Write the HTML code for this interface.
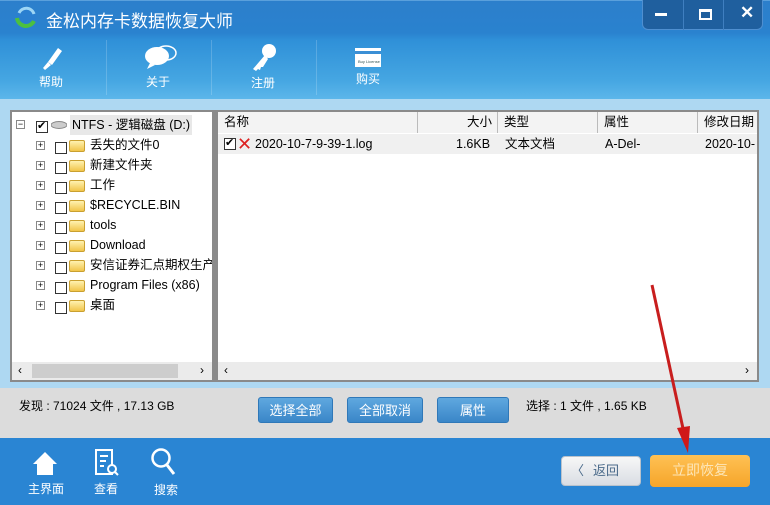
<!DOCTYPE html><html><head><meta charset="utf-8"><style>
*{margin:0;padding:0;box-sizing:border-box}
body{width:770px;height:505px;overflow:hidden;position:relative;font-family:"Liberation Sans","Microsoft YaHei","Noto Sans CJK SC",sans-serif;font-size:12px;background:#aed8f2}
.abs{position:absolute}
#top{left:0;top:0;width:770px;height:99px;background:linear-gradient(#2c7fcb 0,#2a82cf 33px,#2f90d8 40px,#45a6e2 80px,#5cb6ea 99px)}
.title{left:46px;top:7px;color:#fff;font-size:17px;font-family:"Liberation Sans","Noto Sans CJK SC",sans-serif}
.tb{color:#fff;font-size:12px;text-align:center;width:60px}
.sep{top:40px;width:1px;height:55px;background:rgba(255,255,255,.18)}
#win{left:642px;top:0;width:121px;height:30px;background:#1f5f9e;border-radius:0 0 6px 6px;border:1px solid #4f8fd0;border-top:none}
.panel{background:#fff;border:2px solid #8a8a8a;overflow:hidden}
.row{position:absolute;left:0;height:20px;line-height:20px;font-size:12.5px;color:#000;white-space:nowrap}
.cb{position:absolute;width:12px;height:12px;border:1px solid #333;background:#fff}
.pl{position:absolute;width:9px;height:9px;border:1px solid #888;background:#fff;font-size:9px;line-height:7px;text-align:center;color:#000}
.fd{position:absolute;width:16px;height:12px;background:linear-gradient(#fff2b0,#f1c54a);border:1px solid #c9a030;border-radius:2px}
.hd{position:absolute;top:0;height:21px;line-height:21px;border-right:1px solid #bbb;background:#f3f3f3;font-size:12.5px}
.btn{position:absolute;top:397px;height:26px;line-height:26px;color:#fff;text-align:center;font-size:13px;background:linear-gradient(#5fa8df,#3a86c8);border:1px solid #2f78b8;border-radius:3px}
.bi{color:#fff;font-size:12px;text-align:center}
</style></head><body>
<div id="top" class="abs"></div>
<div class="abs" style="left:0;top:0;width:770px;height:1px;background:#5aa0dc"></div>
<svg class="abs" style="left:14px;top:5px" width="24" height="24"><circle cx="12" cy="12" r="10" fill="#2a7fd0"/><path d="M3 13a9 9 0 0 0 17 3" stroke="#4cc040" stroke-width="4" fill="none"/><path d="M5 8a8 8 0 0 1 15 1" stroke="#9dd6f5" stroke-width="3" fill="none"/></svg>
<div class="abs title">金松内存卡数据恢复大师</div>
<div id="win" class="abs"><div class="abs" style="left:12px;top:13px;width:12px;height:3px;background:#fff"></div><div class="abs" style="left:56px;top:9px;width:13px;height:11px;border:2px solid #fff;border-top-width:3px"></div><div class="abs" style="left:97px;top:3px;color:#fff;font-size:17px;font-weight:bold">✕</div><div class="abs" style="left:40px;top:0;width:1px;height:30px;background:#3f7fc0"></div><div class="abs" style="left:80px;top:0;width:1px;height:30px;background:#3f7fc0"></div></div>
<div class="abs sep" style="left:106px"></div><div class="abs sep" style="left:211px"></div><div class="abs sep" style="left:316px"></div>
<svg class="abs" style="left:38px;top:44px" width="26" height="28"><path d="M10 18l10-14 4 3-10 14z" fill="#fff"/><path d="M10 18l-5 6 2 2 6-5z" fill="#fff"/></svg>
<svg class="abs" style="left:144px;top:44px" width="34" height="28"><ellipse cx="13" cy="12" rx="12" ry="9" fill="#fff"/><path d="M6 19l-3 6 8-4z" fill="#fff"/><ellipse cx="22" cy="9" rx="10" ry="7" fill="none" stroke="#fff" stroke-width="1.5"/></svg>
<svg class="abs" style="left:250px;top:42px" width="28" height="30"><circle cx="19" cy="9" r="7" fill="#fff"/><path d="M15 13l-12 14 3 2 2-2 2 1 1-3 2 0 5-8z" fill="#fff"/></svg>
<svg class="abs" style="left:355px;top:48px" width="28" height="20"><rect x="0" y="0" width="26" height="19" fill="#fff"/><rect x="0" y="3" width="26" height="3" fill="#3b8fd5"/><text x="3" y="15" font-size="4" fill="#355">Buy License</text></svg>
<div class="abs tb" style="left:21px;top:73px">帮助</div>
<div class="abs tb" style="left:128px;top:73px">关于</div>
<div class="abs tb" style="left:233px;top:74px">注册</div>
<div class="abs tb" style="left:338px;top:70px">购买</div>

<div class="abs panel" style="left:10px;top:110px;width:204px;height:272px">
<div class="row" style="top:3px;left:4px"><span class="pl" style="left:0;top:5px">−</span><span class="cb" style="left:20px;top:6px;border:1.5px solid #333;font-size:11px;line-height:9px">✔</span><svg style="position:absolute;left:35px;top:6px" width="16" height="8"><ellipse cx="8" cy="4" rx="8" ry="3.5" fill="#ccc" stroke="#888"/></svg><span style="position:absolute;left:54px;background:#e8e8e8;padding:0 2px">NTFS - 逻辑磁盘 (D:)</span></div>
<div id="tr"></div>
<div class="abs" style="left:0;bottom:0;width:200px;height:18px;background:#ebebeb"><div class="abs" style="left:20px;top:2px;width:146px;height:14px;background:#cdcdcd"></div><span class="abs" style="left:6px;top:1px;font-size:12px">‹</span><span class="abs" style="left:188px;top:1px;font-size:12px">›</span></div>
</div>
<div class="abs" style="left:214px;top:110px;width:5px;height:272px;background:#8a8a8a"></div>
<div class="abs panel" style="left:218px;top:110px;width:541px;height:272px;border-left:none">
<div class="hd" style="left:0;width:200px;padding-left:6px">名称</div>
<div class="hd" style="left:200px;width:80px;text-align:right;padding-right:5px">大小</div>
<div class="hd" style="left:280px;width:100px;padding-left:6px">类型</div>
<div class="hd" style="left:380px;width:100px;padding-left:6px">属性</div>
<div class="hd" style="left:480px;width:60px;padding-left:6px;border-right:none">修改日期</div>
<div class="abs" style="left:0;top:22px;width:539px;height:20px;background:#f0f0f0;line-height:20px;font-size:12.5px">
<span class="cb" style="left:6px;top:4px;border:1.5px solid #333;font-size:11px;line-height:9px">✔</span>
<span class="abs" style="left:19px;top:0;color:#d22;font-size:18px;line-height:20px">✕</span>
<span class="abs" style="left:37px">2020-10-7-9-39-1.log</span>
<span class="abs" style="left:238px">1.6KB</span><span class="abs" style="left:287px">文本文档</span><span class="abs" style="left:387px">A-Del-</span><span class="abs" style="left:487px">2020-10-</span></div>
<div class="abs" style="left:0;bottom:0;width:539px;height:18px;background:#ebebeb"><span class="abs" style="left:6px;top:1px">‹</span><span class="abs" style="left:527px;top:1px">›</span></div>
</div>

<div class="abs" style="left:0;top:388px;width:770px;height:50px;background:#dcdcdc"></div>
<div class="abs" style="left:19px;top:397px;font-size:12px">发现 : 71024 文件 , 17.13 GB</div>
<div class="btn" style="left:258px;width:75px">选择全部</div>
<div class="btn" style="left:347px;width:76px">全部取消</div>
<div class="btn" style="left:437px;width:72px">属性</div>
<div class="abs" style="left:526px;top:397px;font-size:12px">选择 : 1 文件 , 1.65 KB</div>

<div class="abs" style="left:0;top:438px;width:770px;height:67px;background:#2a85d3"></div>
<svg class="abs" style="left:32px;top:450px" width="26" height="26"><path d="M13 2L1 14h4v11h16V14h4z" fill="#fff"/></svg>
<svg class="abs" style="left:94px;top:448px" width="26" height="30"><rect x="2" y="2" width="16" height="24" fill="none" stroke="#fff" stroke-width="2"/><path d="M6 8h8M6 13h6M6 18h4" stroke="#fff" stroke-width="2"/><circle cx="18" cy="21" r="4" fill="#2a85d3" stroke="#fff" stroke-width="2"/><path d="M21 24l3 3" stroke="#fff" stroke-width="2"/></svg>
<svg class="abs" style="left:150px;top:447px" width="28" height="32"><circle cx="11" cy="11" r="8.5" fill="none" stroke="#fff" stroke-width="2.5"/><path d="M17 18l7 9" stroke="#fff" stroke-width="3"/></svg>
<div class="abs bi" style="left:28px;top:480px">主界面</div>
<div class="abs bi" style="left:94px;top:480px">查看</div>
<div class="abs bi" style="left:154px;top:481px">搜索</div>
<div class="abs" style="left:561px;top:456px;width:80px;height:30px;border-radius:4px;background:linear-gradient(#f7f7f7,#d9dde3);border:1px solid #b9c2cc;color:#4a6a8a;line-height:28px;font-size:13px"><span style="position:absolute;left:9px">〈</span><span style="position:absolute;left:31px">返回</span></div>
<div class="abs" style="left:650px;top:455px;width:100px;height:32px;border-radius:4px;background:linear-gradient(#ffc154,#f5a52a);text-align:center;line-height:31px;color:#fde6b8;font-size:14px">立即恢复</div>
<svg class="abs" style="left:0;top:0" width="770" height="505"><path d="M652 285L687 447" stroke="#c81e1e" stroke-width="3"/><path d="M677 428l11 25 2-27z" fill="#d01818"/></svg>
<script>
var n=["丢失的文件0","新建文件夹","工作","$RECYCLE.BIN","tools","Download","安信证券汇点期权生产环","Program Files (x86)","桌面"],h="";
for(var i=0;i<n.length;i++){var t=23+i*20;h+='<div class="row" style="top:'+t+'px;left:24px"><span class="pl" style="left:0;top:6px;line-height:7px">+</span><span class="cb" style="left:19px;top:7px"></span><span class="fd" style="left:33px;top:5px"></span><span style="position:absolute;left:54px">'+n[i]+'</span></div>';}
document.getElementById("tr").innerHTML=h;
</script>
</body></html>
